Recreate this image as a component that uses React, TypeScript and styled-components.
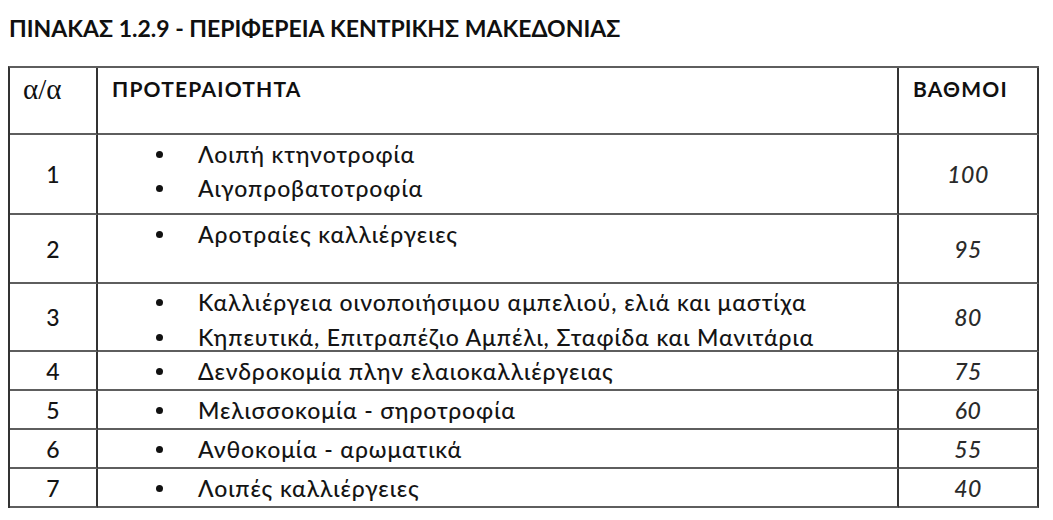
import React from "react";
import styled, { createGlobalStyle } from "styled-components";

const Global = createGlobalStyle`
  html, body { margin: 0; padding: 0; background: #ffffff; }
  body { font-family: Lato, "Open Sans", "Noto Sans", sans-serif; color: #141414; }
`;

const Page = styled.div`
  width: 1053px;
  height: 520px;
  box-sizing: border-box;
  padding: 14px 14px 0 8px;
  overflow: hidden;
`;

const Title = styled.h1`
  margin: 0 0 0 1px;
  font-size: 23px;
  font-weight: 700;
  line-height: 28px;
  color: #101010;
`;

const Grid = styled.div`
  margin-top: 24px;
  display: grid;
  grid-template-columns: 88px 801px 140px;
  border-top: 2px solid #5e5e5e;
  border-left: 2px solid #333;
  width: max-content;
`;

type CellProps = {
  $h: number;
  $justify?: "center" | "start";
  $valign?: "center" | "start";
  $pad?: string;
};

const Cell = styled.div<CellProps>`
  box-sizing: border-box;
  height: ${(p) => p.$h}px;
  border-right: 2px solid #333;
  border-bottom: 2px solid #5e5e5e;
  display: flex;
  justify-content: ${(p) => (p.$justify === "center" ? "center" : "flex-start")};
  align-items: ${(p) => (p.$valign === "start" ? "flex-start" : "center")};
  padding: ${(p) => p.$pad ?? "0"};
  font-size: 22px;
`;

const HeadText = styled.span<{ $serif?: boolean }>`
  font-family: ${(p) => (p.$serif ? '"Liberation Serif", "DejaVu Serif", serif' : 'Lato, "Open Sans", sans-serif')};
  font-weight: ${(p) => (p.$serif ? 400 : 700)};
  font-size: ${(p) => (p.$serif ? "29px" : "21px")};
  letter-spacing: ${(p) => (p.$serif ? "0" : "1.2px")};
  line-height: 26px;
  color: #101010;
`;

const Num = styled.span`
  font-size: 23px;
  font-weight: 500;
  line-height: 30px;
`;

const Score = styled.span`
  font-size: 23px;
  font-style: italic;
  font-weight: 500;
  letter-spacing: 0.5px;
  line-height: 30px;
  color: #2a2a2a;
`;

const List = styled.ul<{ $gap: number }>`
  margin: 0;
  padding: 0 0 0 56px;
  list-style: none;
  display: flex;
  flex-direction: column;
  gap: ${(p) => p.$gap}px;
`;

const Item = styled.li`
  position: relative;
  padding-left: 44px;
  font-size: 23px;
  font-weight: 500;
  letter-spacing: 0.9px;
  line-height: 30px;
  white-space: nowrap;
  &::before {
    content: "";
    position: absolute;
    left: 2px;
    top: 12px;
    width: 7px;
    height: 7px;
    border-radius: 50%;
    background: #111;
  }
`;

type Row = { n: string; items: string[]; score: string; h: number; top?: boolean; pt?: number; gap?: number };

const rows: Row[] = [
  { n: "1", items: ["Λοιπή κτηνοτροφία", "Αιγοπροβατοτροφία"], score: "100", h: 80, top: true, pt: 4, gap: 4 },
  { n: "2", items: ["Αροτραίες καλλιέργειες"], score: "95", h: 69, top: true, pt: 4 },
  {
    n: "3",
    items: ["Καλλιέργεια οινοποιήσιμου αμπελιού, ελιά και μαστίχα", "Κηπευτικά, Επιτραπέζιο Αμπέλι, Σταφίδα και Μανιτάρια"],
    score: "80",
    h: 68,
    top: true,
    pt: 3,
    gap: 5,
  },
  { n: "4", items: ["Δενδροκομία πλην ελαιοκαλλιέργειας"], score: "75", h: 39 },
  { n: "5", items: ["Μελισσοκομία - σηροτροφία"], score: "60", h: 39 },
  { n: "6", items: ["Ανθοκομία - αρωματικά"], score: "55", h: 39 },
  { n: "7", items: ["Λοιπές καλλιέργειες"], score: "40", h: 39 },
];

export default function App() {
  return (
    <>
      <Global />
      <Page>
        <Title>ΠΙΝΑΚΑΣ 1.2.9 - ΠΕΡΙΦΕΡΕΙΑ ΚΕΝΤΡΙΚΗΣ ΜΑΚΕΔΟΝΙΑΣ</Title>
        <Grid>
          <Cell $h={67} $valign="start" $pad="8px 0 0 13px">
            <HeadText $serif>α/α</HeadText>
          </Cell>
          <Cell $h={67} $valign="start" $pad="8px 0 0 14px">
            <HeadText>ΠΡΟΤΕΡΑΙΟΤΗΤΑ</HeadText>
          </Cell>
          <Cell $h={67} $valign="start" $pad="8px 0 0 14px">
            <HeadText>ΒΑΘΜΟΙ</HeadText>
          </Cell>
          {rows.map((r) => (
            <React.Fragment key={r.n}>
              <Cell $h={r.h} $justify="center">
                <Num>{r.n}</Num>
              </Cell>
              <Cell $h={r.h} $valign={r.top ? "start" : "center"} $pad={r.top ? `${r.pt}px 0 0 0` : "0"}>
                <List $gap={r.gap ?? 0}>
                  {r.items.map((it) => (
                    <Item key={it}>{it}</Item>
                  ))}
                </List>
              </Cell>
              <Cell $h={r.h} $justify="center">
                <Score>{r.score}</Score>
              </Cell>
            </React.Fragment>
          ))}
        </Grid>
      </Page>
    </>
  );
}
